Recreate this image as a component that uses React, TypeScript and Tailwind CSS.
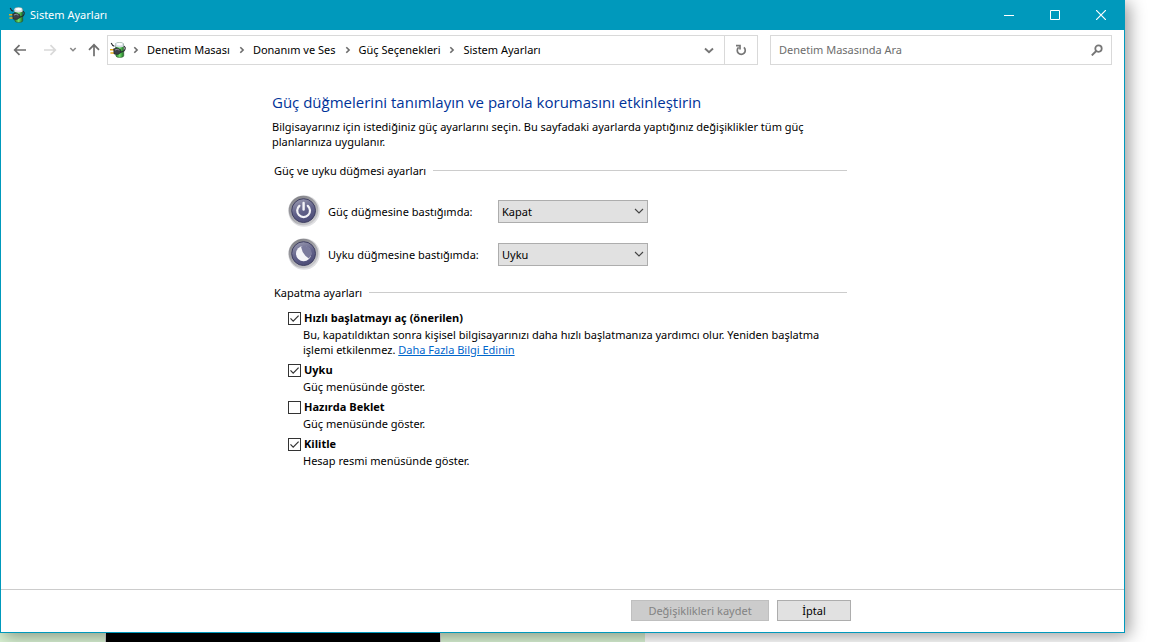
import { useState } from 'react';
import type { ReactNode } from 'react';

type Option = { id: string; title: string; desc: ReactNode; checked: boolean };

const CRUMBS = ['Denetim Masası', 'Donanım ve Ses', 'Güç Seçenekleri', 'Sistem Ayarları'];

const OPTIONS: Option[] = [
  {
    id: 'fast-startup',
    title: 'Hızlı başlatmayı aç (önerilen)',
    desc: (
      <>
        Bu, kapatıldıktan sonra kişisel bilgisayarınızı daha hızlı başlatmanıza yardımcı olur. Yeniden başlatma
        işlemi etkilenmez.{' '}
        <a href="#" className="text-[#0066cc] underline">Daha Fazla Bilgi Edinin</a>
      </>
    ),
    checked: true,
  },
  { id: 'sleep', title: 'Uyku', desc: 'Güç menüsünde göster.', checked: true },
  { id: 'hibernate', title: 'Hazırda Beklet', desc: 'Güç menüsünde göster.', checked: false },
  { id: 'lock', title: 'Kilitle', desc: 'Hesap resmi menüsünde göster.', checked: true },
];

function BatteryIcon() {
  return (
    <svg width="16" height="16" viewBox="0 0 16 16" className="shrink-0" aria-hidden="true">
      <defs>
        <linearGradient id="cell" x1="0" x2="1">
          <stop offset="0" stopColor="#1f7a25" />
          <stop offset="0.5" stopColor="#6fe06a" />
          <stop offset="1" stopColor="#1c6d22" />
        </linearGradient>
      </defs>
      <path d="M5.5 2.5 Q5.5 .6 9.5 .6 T13.5 2.5 L13.8 13.5 Q13.8 15.5 9.8 15.5 T5.8 13.5Z" fill="url(#cell)" stroke="#2e4a30" strokeWidth=".5" />
      <path d="M5.2 2.5 Q5.4 .3 9.5 .3 T13.6 2.5 L13.6 4.8 Q9.5 6.4 5.4 4.8Z" fill="#d3dce4" />
      <ellipse cx="9.5" cy="2.2" rx="3" ry="1.3" fill="#fff" />
      <path d="M1.2 1 Q2.2 3.6 4.4 4.2" fill="none" stroke="#24282c" strokeWidth="1.1" />
      <path d="M10.5 10.2 Q15.5 9.5 15.2 5.6 L14 4" fill="none" stroke="#24282c" strokeWidth="1.1" />
      <path d="M0 7.8H4.4 M.4 11H4.6" stroke="#e5aa1a" strokeWidth="1.5" />
      <path d="M3.6 6.8 L7 6 L10.6 7.6 L11.2 10.4 L8 12.4 L4 12Z" fill="#3c4046" stroke="#17191b" strokeWidth=".5" />
      <path d="M5 8 L7.2 7.2 L9.4 8.2" fill="none" stroke="#959ba1" strokeWidth=".9" />
    </svg>
  );
}

function RoundIcon({ id, children }: { id: string; children: ReactNode }) {
  return (
    <svg width="32" height="32" viewBox="0 0 32 32" className="shrink-0" aria-hidden="true">
      <defs>
        <linearGradient id={`${id}-ring`} x1="0.2" y1="0" x2="0.8" y2="1">
          <stop offset="0" stopColor="#7f7f84" />
          <stop offset="0.5" stopColor="#a6a6ab" />
          <stop offset="1" stopColor="#cfcfd2" />
        </linearGradient>
        <linearGradient id={`${id}-face`} x1="0.3" y1="0" x2="0.7" y2="1">
          <stop offset="0" stopColor="#9797ae" />
          <stop offset="0.5" stopColor="#62628a" />
          <stop offset="1" stopColor="#4b4b76" />
        </linearGradient>
      </defs>
      <circle cx="16" cy="16" r="15.8" fill="#e0e0e3" />
      <circle cx="15.5" cy="15.5" r="14.8" fill={`url(#${id}-ring)`} />
      <circle cx="15.6" cy="15.6" r="11.9" fill={`url(#${id}-face)`} stroke="#3f3f62" strokeWidth="1" />
      {children}
    </svg>
  );
}

function Crumb({ label }: { label: string }) {
  return (
    <li className="flex items-center">
      <svg width="21" height="10" viewBox="0 0 21 10" fill="none" stroke="#6b6b6b" strokeWidth="1.6" aria-hidden="true">
        <path d="M8.3 2.2 L11.1 5 L8.3 7.8" />
      </svg>
      <a href="#" className="whitespace-nowrap text-black">{label}</a>
    </li>
  );
}

function SectionTitle({ children }: { children: ReactNode }) {
  return (
    <div className="flex items-center gap-[7px] pl-0.5">
      <h2>{children}</h2>
      <div className="h-px flex-1 bg-[#cccccc]" />
    </div>
  );
}

function SelectRow({ id, label, initial, icon }: { id: string; label: string; initial: string; icon: ReactNode }) {
  const [value, setValue] = useState(initial);

  return (
    <div className="flex items-center">
      {icon}
      <label htmlFor={id} className="ml-2 w-[170px]">{label}</label>
      <div className="grid w-[150px] items-center">
        <select
          id={id}
          value={value}
          onChange={e => setValue(e.target.value)}
          className="col-start-1 row-start-1 h-[23px] appearance-none border border-[#adadad] bg-[#e1e1e1] pl-[3px] pr-5 text-black outline-none"
        >
          <option>Hiçbir şey yapma</option>
          <option>Uyku</option>
          <option>Hazırda Beklet</option>
          <option>Kapat</option>
        </select>
        <svg width="10" height="6" viewBox="0 0 10 6" fill="none" stroke="#444" strokeWidth="1.1" className="pointer-events-none col-start-1 row-start-1 mr-1 justify-self-end" aria-hidden="true">
          <path d="M1 1 L5 5 L9 1" />
        </svg>
      </div>
    </div>
  );
}

function CheckItem({ option }: { option: Option }) {
  const [checked, setChecked] = useState(option.checked);

  return (
    <li>
      <div className="flex items-center gap-[3px]">
        <span className="grid shrink-0">
          <input
            id={option.id}
            type="checkbox"
            checked={checked}
            onChange={e => setChecked(e.target.checked)}
            className="col-start-1 row-start-1 size-[13px] appearance-none border border-[#333333] bg-white"
          />
          {checked && (
            <svg width="13" height="13" viewBox="0 0 13 13" fill="none" stroke="#333" strokeWidth="1.2" className="pointer-events-none col-start-1 row-start-1" aria-hidden="true">
              <path d="M2.5 6.3 L5.2 9.2 L10.6 3.6" />
            </svg>
          )}
        </span>
        <label htmlFor={option.id} className="font-['Open_Sans',sans-serif] font-bold leading-[18px]">{option.title}</label>
      </div>
      <p className="pl-[15px]">{option.desc}</p>
    </li>
  );
}

export default function App() {
  const [query, setQuery] = useState('');

  return (
    <div className="flex min-h-screen flex-col bg-white font-['Noto_Sans','Open_Sans',sans-serif] text-[11px] leading-[15px] text-black">
      {/* Window */}
      <div className="relative z-10 mr-[35px] flex flex-1 flex-col border border-t-0 border-[#0099bc] bg-white shadow-[4px_3px_16px_rgba(0,0,0,0.4)]">
        {/* Title bar */}
        <header className="flex h-[30px] items-start bg-[#0099bc] text-white">
          <div className="flex h-[29px] flex-1 items-center gap-[5px] pl-2">
            <BatteryIcon />
            <h1>Sistem Ayarları</h1>
          </div>
          <button type="button" aria-label="Simge durumuna küçült" className="flex h-[29px] w-[46px] items-center justify-center">
            <svg width="10" height="10" viewBox="0 0 10 10"><path d="M0 5.5H10" stroke="#fff" /></svg>
          </button>
          <button type="button" aria-label="Ekranı kapla" className="flex h-[29px] w-[46px] items-center justify-center">
            <svg width="10" height="10" viewBox="0 0 10 10"><path d="M.5 .5H9.5V9.5H.5Z" fill="none" stroke="#fff" /></svg>
          </button>
          <button type="button" aria-label="Kapat" className="flex h-[29px] w-[46px] items-center justify-center">
            <svg width="10" height="10" viewBox="0 0 10 10"><path d="M0 0L10 10M10 0L0 10" stroke="#fff" strokeWidth="1.2" /></svg>
          </button>
        </header>

        {/* Navigation row */}
        <nav className="flex items-center pr-3 pt-[5px]">
          <button type="button" aria-label="Geri" className="ml-3 flex w-[14px] justify-center">
            <svg width="14" height="12" viewBox="0 0 14 12" fill="none" stroke="#6e6e6e" strokeWidth="1.7"><path d="M13 6H1.8M6.5 1.2L1.7 6L6.5 10.8" /></svg>
          </button>
          <button type="button" aria-label="İleri" disabled className="ml-4 flex w-[14px] justify-center">
            <svg width="14" height="12" viewBox="0 0 14 12" fill="none" stroke="#d9d9d9" strokeWidth="1.7"><path d="M1 6H12.2M7.5 1.2L12.3 6L7.5 10.8" /></svg>
          </button>
          <button type="button" aria-label="Son konumlar" className="ml-3 flex w-2 justify-center">
            <svg width="8" height="6" viewBox="0 0 8 6" fill="none" stroke="#8a8a8a" strokeWidth="1.6"><path d="M1.3 1L4 3.7L6.7 1" /></svg>
          </button>
          <button type="button" aria-label="Yukarı" className="ml-2.5 flex w-[14px] justify-center">
            <svg width="12" height="14" viewBox="0 0 12 14" fill="none" stroke="#6e6e6e" strokeWidth="1.7"><path d="M6 13.2V2M1 6.8L6 1.8L11 6.8" /></svg>
          </button>

          <div className="ml-1.5 flex h-[30px] flex-1 border border-[#d9d9d9]">
            <div className="flex flex-1 items-center pb-px pl-0.5">
              <BatteryIcon />
              <ol className="flex gap-0.5">
                {CRUMBS.map(c => <Crumb key={c} label={c} />)}
              </ol>
            </div>
            <button type="button" aria-label="Önceki konumlar" className="flex w-[30px] items-center justify-center">
              <svg width="10" height="8" viewBox="0 0 10 8" fill="none" stroke="#767676" strokeWidth="1.9"><path d="M1 2.5L5 6.3L9 2.5" /></svg>
            </button>
            <button type="button" aria-label="Yenile" className="flex w-[33px] items-center justify-center border-l border-[#d9d9d9]">
              <svg width="12" height="12" viewBox="0 0 12 12" fill="none" stroke="#767676" strokeWidth="1.7">
                <path d="M8.9 3.4 A4 4 0 1 1 3.6 3.4" />
                <path d="M1 1.7H5V5.4" />
              </svg>
            </button>
          </div>

          <div className="ml-3 flex h-[30px] w-[342px] items-center border border-[#d9d9d9] px-2 pb-px">
            <input
              type="search"
              aria-label="Denetim Masasında Ara"
              placeholder="Denetim Masasında Ara"
              value={query}
              onChange={e => setQuery(e.target.value)}
              className="min-w-0 flex-1 outline-none placeholder:text-[#6d6d6d]"
            />
            <svg width="12" height="12" viewBox="0 0 12 12" fill="none" stroke="#767676" aria-hidden="true">
              <circle cx="7.5" cy="4.6" r="3.2" strokeWidth="1.8" />
              <path d="M5.2 7L.8 11.4" strokeWidth="1.9" />
            </svg>
          </div>
        </nav>

        {/* Settings */}
        <main className="flex-1 pb-4 pr-1.5 pt-[27px]">
          <div className="mx-auto max-w-[575px]">
            <h2 className="font-['Open_Sans',sans-serif] text-[15px] leading-5 text-[#003399]">Güç düğmelerini tanımlayın ve parola korumasını etkinleştirin</h2>
            <p className="mt-[7px]">
              Bilgisayarınız için istediğiniz güç ayarlarını seçin. Bu sayfadaki ayarlarda yaptığınız değişiklikler tüm güç planlarınıza uygulanır.
            </p>

            <section className="mt-3.5">
              <SectionTitle>Güç ve uyku düğmesi ayarları</SectionTitle>
              <div className="mt-[17px] flex flex-col gap-[11px] pl-4">
                <SelectRow
                  id="power-button"
                  label="Güç düğmesine bastığımda:"
                  initial="Kapat"
                  icon={
                    <RoundIcon id="power">
                      <path d="M11.4 10.8 A6.4 6.4 0 1 0 19.8 10.8" fill="none" stroke="#f4f4f8" strokeWidth="2.2" strokeLinecap="round" />
                      <path d="M15.6 8V14.6" stroke="#f4f4f8" strokeWidth="2.4" strokeLinecap="round" />
                    </RoundIcon>
                  }
                />
                <SelectRow
                  id="sleep-button"
                  label="Uyku düğmesine bastığımda:"
                  initial="Uyku"
                  icon={
                    <RoundIcon id="sleep">
                      <circle cx="15.6" cy="15.6" r="7.6" fill="#f4f4f8" />
                      <path d="M13 8.8 A7 7 0 0 1 20.8 20.4 Q14.4 16.8 13 8.8Z" fill="#7a7a9c" />
                    </RoundIcon>
                  }
                />
              </div>
            </section>

            <section className="mt-[15px]">
              <SectionTitle>Kapatma ayarları</SectionTitle>
              <ul className="mt-[9px] flex flex-col gap-1 pl-4">
                {OPTIONS.map(o => <CheckItem key={o.id} option={o} />)}
              </ul>
            </section>
          </div>
        </main>

        {/* Footer */}
        <footer className="border-t border-[#cccccc] pb-[11px] pr-1.5 pt-2.5">
          <div className="mx-auto flex max-w-[583px] justify-end gap-2">
            <button type="button" disabled className="h-[21px] w-[138px] border border-[#bfbfbf] bg-[#cccccc] text-[#838383]">
              Değişiklikleri kaydet
            </button>
            <button type="button" className="h-[21px] w-[74px] border border-[#adadad] bg-[#e1e1e1]">
              İptal
            </button>
          </div>
        </footer>
      </div>

      {/* Desktop showing below the window */}
      <div className="flex h-[9px]">
        <div className="w-[105px] bg-[#d9f2d3]" />
        <div className="relative z-20 w-[336px] border-x border-[#aaaaaa] bg-black" />
        <div className="w-[204px] bg-[#d9f2d3]" />
        <div className="flex-1 bg-white" />
      </div>
    </div>
  );
}
